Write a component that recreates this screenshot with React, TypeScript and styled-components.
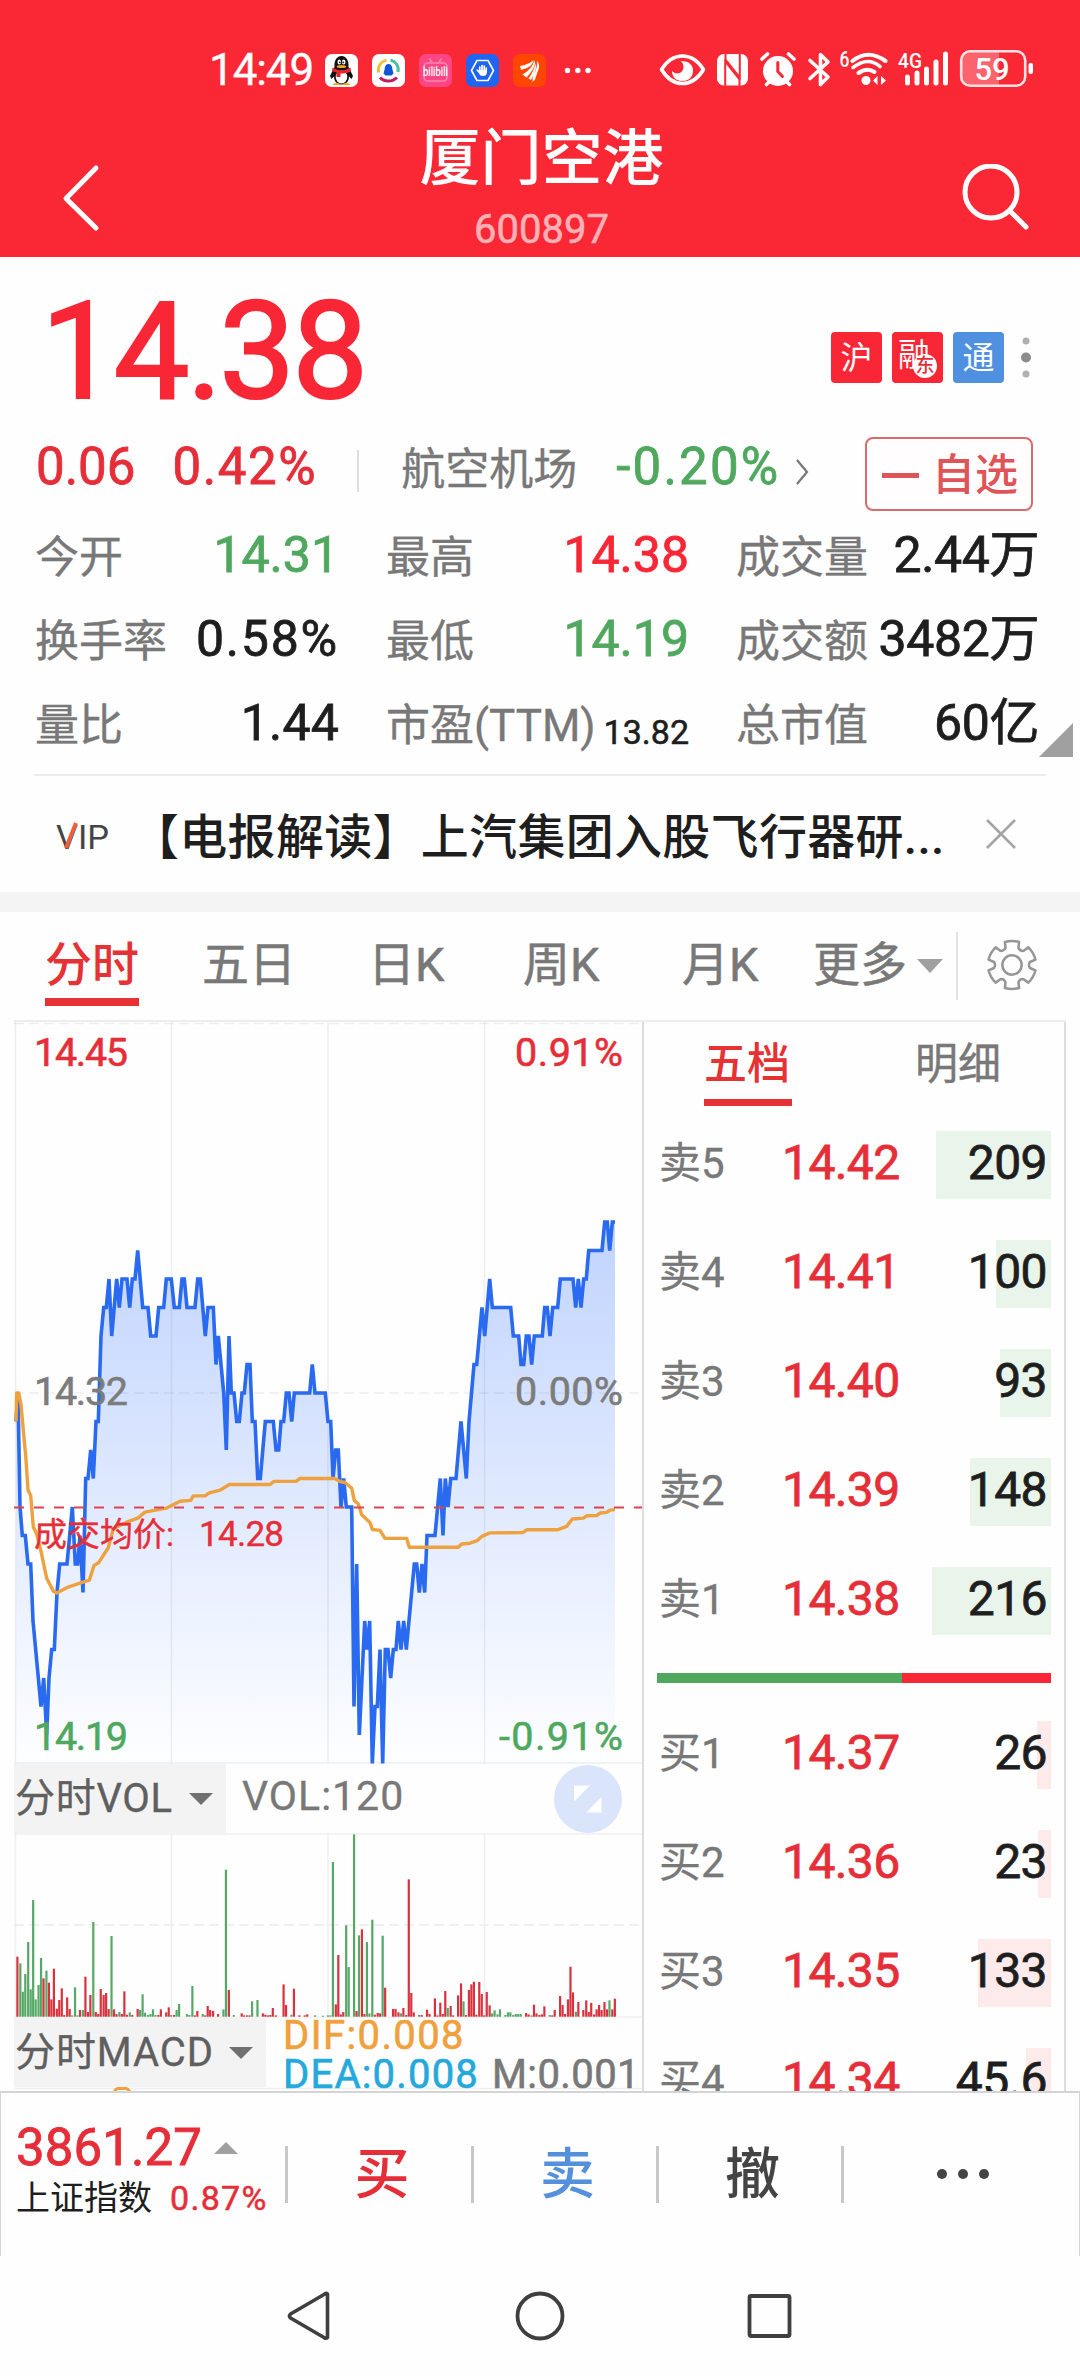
import React from 'react';
import styled, { createGlobalStyle } from 'styled-components';

const C = {
  header: '#fa2735',
  red: '#e62e39',
  tabRed: '#e63234',
  brightRed: '#f92736',
  green: '#4fa85e',
  gray: '#787878',
  dark: '#1e1e1e',
  line: '#ececec',
};

const Global = createGlobalStyle`
  html, body { margin: 0; padding: 0; background: #fefefe; }
  * { box-sizing: border-box; }
  body { font-family: Roboto, "Noto Sans CJK SC", sans-serif; }
`;

const Screen = styled.div`
  width: 1080px;
  height: 2376px;
  display: flex;
  flex-direction: column;
  background: #fefefe;
  overflow: hidden;
`;

interface TextProps {
  $size: number;
  $color?: string;
  $weight?: number;
  $track?: number;
}
const Text = styled.span<TextProps>`
  font-size: ${(p) => p.$size}px;
  line-height: ${(p) => Math.round(p.$size * 1.1)}px;
  color: ${(p) => p.$color ?? C.dark};
  font-weight: ${(p) => p.$weight ?? 500};
  letter-spacing: ${(p) => p.$track ?? 0}px;
  white-space: nowrap;
`;
// Figures are set a little heavier than regular and lighter than medium.
const Num = styled(Text)`
  font-weight: 400;
  -webkit-text-stroke: 0.016em;
`;
// Captions get a hairline of extra weight.
const Caption = styled(Text)`
  font-weight: 400;
  -webkit-text-stroke: 0.008em;
`;

/* ---------- header ---------- */
const Header = styled.header`
  height: 257px;
  background: ${C.header};
  flex: none;
`;
const StatusBar = styled.div`
  height: 92px;
  padding: 48px 46px 0 209px;
  display: flex;
  align-items: center;
`;
const AppIcons = styled.div`
  display: flex;
  gap: 14px;
  margin-left: 12px;
  svg { display: block; }
`;
const SystemIcons = styled.svg`
  margin-left: auto;
  display: block;
`;
const TitleBar = styled.div`
  height: 165px;
  padding: 0 50px 0 62px;
  display: grid;
  grid-template-columns: 80px 1fr 70px;
`;
const IconButton = styled.div`
  padding-top: 72px;
  svg { display: block; }
`;
const TitleBlock = styled.div`
  display: flex;
  flex-direction: column;
  align-items: center;
  padding-top: 31px;
  padding-right: 19px;
`;
const Title = styled.h1`
  margin: 0;
  font-size: 61px;
  line-height: 72px;
  font-weight: 500;
  color: #fff;
`;
const Code = styled.div`
  margin-top: 13px;
  font-size: 40px;
  line-height: 44px;
  color: #ffb1b6;
  -webkit-text-stroke: 0.6px;
`;

/* ---------- quote ---------- */
const PriceRow = styled.div`
  height: 180px;
  padding: 11px 34px 0 41px;
  display: flex;
  align-items: center;
  flex: none;
`;
const Tags = styled.div`
  margin-left: auto;
  margin-top: 10px;
  display: flex;
  align-items: center;
  gap: 10px;
`;
const Tag = styled.div<{ $bg: string }>`
  position: relative;
  width: 51px;
  height: 51px;
  border-radius: 4px;
  background: ${(p) => p.$bg};
  color: #fff;
  font-size: 32px;
  line-height: 52px;
  text-align: center;
`;
const TagShift = styled.span`
  display: block;
  width: 39px;
  line-height: 47px;
  padding-left: 5px;
`;
const TagBadge = styled.span`
  position: absolute;
  left: 21px;
  top: 22px;
  width: 24px;
  height: 24px;
  border-radius: 50%;
  background: #fff;
  color: ${C.red};
  font-size: 19px;
  font-weight: 500;
  line-height: 24px;
`;
const MoreDots = styled.svg`
  display: block;
  margin-left: 6px;
`;
const ChangeRow = styled.div`
  height: 74px;
  padding: 0 47px 0 36px;
  display: flex;
  align-items: flex-start;
  flex: none;
`;
const ChangeInfo = styled.div`
  height: 60px;
  display: flex;
  align-items: center;
`;
const ChangeNum = styled(Num)<{ $left?: number }>`
  margin-left: ${(p) => p.$left ?? 0}px;
`;
const Sector = styled(Caption)`
  margin-top: 5px;
`;
const Chevron = styled.svg`
  margin: 10px 0 0 15px;
`;
const ThinDivider = styled.i`
  width: 2px;
  height: 42px;
  margin: 8px 42px 0 40px;
  background: #dedede;
`;
const WatchButton = styled.button`
  margin: 0 0 0 auto;
  width: 168px;
  height: 74px;
  padding: 2px 0 0 2px;
  border: 2px solid #dd6a6c;
  border-radius: 8px;
  background: #fffdfd;
  display: flex;
  align-items: center;
  justify-content: center;
  gap: 13px;
  font-family: inherit;
`;
const Minus = styled.i`
  width: 37px;
  height: 5px;
  background: #df5557;
`;
const Stats = styled.div`
  height: 263px;
  padding-top: 2px;
  display: grid;
  grid-template-columns: 304px 303px 303px;
  column-gap: 47px;
  grid-auto-rows: 84px;
  padding-left: 35px;
  position: relative;
  flex: none;
`;
const Stat = styled.div`
  display: flex;
  justify-content: space-between;
  align-items: center;
`;
const StatLabel = styled(Caption)`
  margin-top: 6px;
`;
const StatValue = styled(Num)<{ $drop?: number }>`
  margin-top: ${(p) => p.$drop ?? 0}px;
`;
const Corner = styled.i`
  position: absolute;
  right: 7px;
  bottom: 17px;
  border-left: 34px solid transparent;
  border-bottom: 34px solid #a0a0a0;
`;
const News = styled.div`
  height: 118px;
  margin: 0 34px;
  border-top: 2px solid ${C.line};
  display: flex;
  align-items: center;
  flex: none;
`;
const Vip = styled.svg`
  margin: 6px 0 0 22px;
  flex: none;
  overflow: visible;
`;
const NewsTitle = styled(Text)`
  margin: 6px 0 0 19px;
  width: 820px;
`;
const CloseIcon = styled.svg`
  margin-left: 34px;
`;
const Band = styled.div`
  height: 20px;
  background: #f4f4f4;
  flex: none;
`;

/* ---------- period tabs ---------- */
const Tabs = styled.nav`
  height: 108px;
  display: flex;
  align-items: flex-start;
  padding-left: 45px;
  flex: none;
`;
const Tab = styled.div<{ $w: number; $active?: boolean }>`
  width: ${(p) => p.$w}px;
  height: 94px;
  padding-top: 26px;
  font-size: 47px;
  line-height: 54px;
  font-weight: ${(p) => (p.$active ? 500 : 400)};
  color: ${(p) => (p.$active ? C.tabRed : C.gray)};
  -webkit-text-stroke: ${(p) => (p.$active ? 0 : 0.5)}px;
  white-space: nowrap;
`;
const TabInner = styled.span<{ $active?: boolean }>`
  display: inline-block;
  height: 68px;
  border-bottom: 8px solid ${(p) => (p.$active ? C.tabRed : 'transparent')};
`;
const Caret = styled.i<{ $w: number; $h: number; $color: string; $up?: boolean }>`
  display: inline-block;
  border-left: ${(p) => p.$w / 2}px solid transparent;
  border-right: ${(p) => p.$w / 2}px solid transparent;
  ${(p) => (p.$up ? 'border-bottom' : 'border-top')}: ${(p) => p.$h}px solid ${(p) => p.$color};
`;
const MoreCaret = styled(Caret)`
  margin: 47px 0 0 8px;
`;
const TabsDivider = styled.i`
  width: 2px;
  height: 68px;
  margin: 20px 0 0 13px;
  background: #e3e3e3;
`;
const Gear = styled.svg`
  margin: 27px 0 0 28px;
`;

/* ---------- main area ---------- */
const Main = styled.main`
  height: 1071px;
  margin: 0 14px;
  border-top: 2px solid #ededed;
  display: grid;
  grid-template-columns: 628px 424px;
  overflow: hidden;
  flex: none;
`;
const ChartColumn = styled.section`
  display: flex;
  flex-direction: column;
  svg { display: block; flex: none; }
`;
const IndicatorRow = styled.div`
  height: 69px;
  display: flex;
  flex: none;
  position: relative;
`;
const IndicatorPicker = styled.div<{ $w: number }>`
  width: ${(p) => p.$w}px;
  padding: 0 13px 0 1px;
  background: #f3f3f3;
  display: flex;
  align-items: center;
  justify-content: space-between;
  flex: none;
`;
const IndicatorValue = styled(Caption)`
  margin: 10px 0 0 16px;
`;
const ExpandButton = styled.svg`
  margin: 1px 20px 0 auto;
`;
const MacdValues = styled.div`
  padding: 0 0 0 17px;
  display: grid;
  grid-template-columns: auto auto;
  grid-template-rows: 39px 39px;
  column-gap: 13px;
  align-content: start;
  height: 72px;
`;
const MacdText = styled(Num)`
  line-height: 39px;
  margin-top: -2px;
`;
const BookColumn = styled.section`
  border-left: 2px solid #dddddd;
  border-right: 2px solid #dddddd;
  padding: 0 13px 0 13px;
`;
const BookTabs = styled.div`
  height: 84px;
  padding-left: 47px;
  display: flex;
  gap: 123px;
`;
const BookTab = styled.div<{ $active?: boolean }>`
  width: 88px;
  height: 84px;
  padding-top: 17px;
  font-size: 43px;
  line-height: 50px;
  font-weight: ${(p) => (p.$active ? 500 : 400)};
  -webkit-text-stroke: ${(p) => (p.$active ? 0 : 0.4)}px;
  color: ${(p) => (p.$active ? C.tabRed : C.gray)};
  border-bottom: 7px solid ${(p) => (p.$active ? C.tabRed : 'transparent')};
`;
const BookRows = styled.div<{ $top: number }>`
  padding-top: ${(p) => p.$top}px;
  display: flex;
  flex-direction: column;
  gap: 41px;
`;
const BookRow = styled.div<{ $bar: number; $tint: string }>`
  height: 68px;
  padding: 0 4px 6px 2px;
  display: grid;
  grid-template-columns: 123px 1fr auto;
  align-items: center;
  background: linear-gradient(${(p) => p.$tint}, ${(p) => p.$tint}) right center / ${(p) => p.$bar}px 100% no-repeat;
`;
const Ratio = styled.div`
  height: 10px;
  margin-top: 38px;
  display: grid;
  grid-template-columns: 245px 149px;
`;
const RatioPart = styled.i<{ $bg: string }>`
  background: ${(p) => p.$bg};
`;
const BookLabel = styled(Caption)`
  margin-top: 4px;
`;

/* ---------- bottom ---------- */
const TradeBar = styled.footer`
  height: 165px;
  border: 2px solid #d4d4d4;
  border-width: 2px 1px 0 1px;
  display: flex;
  padding: 0 0 27px 0;
  align-items: center;
  flex: none;
`;
const IndexBlock = styled.div`
  width: 284px;
  padding: 14px 0 0 15px;
`;
const IndexLine = styled.div<{ $gap: number }>`
  display: flex;
  align-items: center;
  gap: ${(p) => p.$gap}px;
  & + & { margin-top: 4px; }
`;
const TradeItem = styled.div<{ $w: number; $color: string }>`
  width: ${(p) => p.$w}px;
  height: 57px;
  margin-top: 26px;
  border-left: 3px solid #c8c8c8;
  display: flex;
  align-items: center;
  justify-content: center;
  font-size: 55px;
  line-height: 57px;
  font-weight: 500;
  color: ${(p) => p.$color};
  padding-left: 5px;
`;
const NavBar = styled.div`
  height: 120px;
  display: flex;
  padding: 34px 0 0 286px;
  flex: none;
`;
const NavIcon = styled.svg<{ $gap: number }>`
  margin-right: ${(p) => p.$gap}px;
`;

/* ---------- data ---------- */
// Horizontal positions are stored in thirds of a pixel, vertical ones in ticks of 0.01 around 14.32.
const MORNING: number[][] = [
  [48, -1], [54, 0], [60, -4], [67, -5], [76, -5], [84, -6], [92, -6], [99, -8], [123, -11], [131, -10], [140, -12],
  [147, -10], [155, -9], [163, -9], [171, -7], [179, -6], [201, -6], [209, -5], [217, -4], [226, -6], [233, -6],
  [240, -5], [249, -7], [257, -3], [264, -3], [272, -2], [280, -3], [288, -1], [295, -1], [303, 2], [311, 3], [319, 3],
  [327, 4], [335, 2], [350, 4], [358, 3], [366, 4], [381, 4], [389, 3], [397, 4], [405, 4], [413, 5], [428, 3],
  [444, 3], [452, 2], [468, 2], [476, 3], [491, 3], [499, 4], [514, 4], [523, 3], [538, 3], [546, 4], [553, 4],
  [561, 3], [585, 3], [593, 4], [601, 4], [616, 2], [624, 3], [640, 3], [648, 1], [655, 2], [671, 0], [679, -2],
  [687, 2], [694, 0], [702, 0], [710, -1], [718, -1], [726, 0], [733, 0], [741, 1], [750, 1], [757, -1], [765, -1],
  [773, -3], [781, -3], [796, -1], [820, -1], [828, -2], [836, -2], [843, -1], [851, -1], [859, 0], [867, 0],
  [875, -1], [883, 0], [929, 0], [937, 1], [945, 0], [976, 0],
];
const AFTERNOON: number[][] = [
  [984, -1], [992, -1], [999, -3], [1007, -2], [1015, -2], [1023, -4], [1031, -3], [1039, -4], [1055, -4],
  [1062, -11], [1070, -6], [1078, -12], [1086, -10], [1094, -8], [1101, -9], [1109, -8], [1117, -13], [1125, -11],
  [1132, -11], [1140, -9], [1148, -13], [1156, -9], [1164, -9], [1172, -10], [1180, -9], [1188, -9], [1195, -8],
  [1203, -9], [1211, -8], [1219, -9], [1243, -6], [1250, -6], [1258, -7], [1266, -6], [1274, -7], [1281, -5],
  [1305, -5], [1321, -3], [1329, -5], [1336, -3], [1344, -4], [1352, -3], [1368, -3], [1383, -1], [1399, -3],
  [1407, -1], [1422, 1], [1430, 1], [1446, 3], [1454, 2], [1469, 4], [1477, 3], [1532, 3], [1540, 2], [1556, 2],
  [1563, 1], [1571, 1], [1579, 2], [1587, 2], [1595, 1], [1603, 2], [1627, 2], [1634, 3], [1642, 3], [1650, 2],
  [1658, 3], [1673, 3], [1681, 4], [1719, 4], [1727, 3], [1735, 4], [1743, 3], [1751, 4], [1759, 4], [1766, 5],
  [1806, 5], [1814, 6], [1822, 6], [1829, 5], [1837, 6], [1845, 6],
];
const PRICE = [...MORNING, ...AFTERNOON].map(([x, t]) => [x / 3 - 14, 371 - t * 28.5]);

const AVERAGE = [
  [48, -1], [50, 0], [56, 0], [63, -0.4], [70, -1.3], [77, -2.2], [84, -3.4], [92, -3.6], [100, -4.7], [110, -4.95],
  [122, -5.5], [140, -6.5], [160, -6.95], [170, -7.02], [200, -6.83], [240, -6.67], [268, -6.57], [282, -6.05],
  [295, -5.97], [325, -5.43], [340, -4.76], [378, -4.54], [415, -4.38], [435, -4.18], [500, -4.04], [540, -3.8],
  [572, -3.77], [580, -3.61], [615, -3.61], [628, -3.5], [660, -3.41], [688, -3.21], [810, -3.21], [822, -3.1],
  [888, -3.1], [900, -3], [1005, -3], [1020, -3.11], [1035, -3.14], [1055, -3.34], [1063, -3.77], [1075, -3.9],
  [1085, -4.27], [1110, -4.54], [1117, -4.79], [1140, -4.82], [1155, -5.1], [1220, -5.1], [1228, -5.41],
  [1375, -5.41], [1385, -5.3], [1410, -5.27], [1432, -5.18], [1447, -5.02], [1470, -4.91], [1568, -4.9],
  [1580, -4.8], [1672, -4.8], [1700, -4.68], [1717, -4.42], [1750, -4.39], [1760, -4.31], [1790, -4.3],
  [1800, -4.21], [1820, -4.19], [1830, -4.11], [1845, -4.09],
].map(([x, t]) => [x / 3 - 14, 371 - t * 28.5]);

const VOLUME =
  'r42:180 g49:160 g55:75 g61:128 g68:224 g74:82 g80:350 g86:52 g93:95 g99:176 r105:115 g112:138 r118:102 r124:52 r130:144 r137:24 r143:50 r149:85 r155:5 r162:58 r168:23 g174:4 g181:88 g187:4 r193:20 g200:20 r206:120 r212:14 r218:65 g225:284 r231:14 r237:8 r243:83 r250:65 r256:71 r262:23 g269:242 r275:22 r281:8 g288:14 r294:8 r300:76 r306:6 g313:13 r319:5 r332:23 g338:20 g344:67 g350:12 g357:5 g363:8 g369:22 g375:5 r382:5 r388:22 r401:13 r407:28 g413:5 r420:5 g426:20 g432:38 g451:8 g457:5 g464:92 r470:4 r476:17 g489:8 r495:4 r501:32 r507:20 r514:17 r526:8 g539:22 g545:441 r552:80 g564:5 r583:10 r589:4 r596:4 r602:4 g608:46 g621:50 r634:10 r640:6 r646:4 r652:5 r658:26 r665:4 r684:97 r690:35 g703:6 r709:84 r722:4 r735:4 r741:7 g760:4 g779:3 g791:4 g797:4 g803:464 r810:37 r816:185 r822:7 r828:14 g835:274 g841:149 g854:547 r860:17 g866:244 r873:262 r879:8 g885:224 g891:10 g898:291 r904:6 r911:11 r917:10 g923:243 r929:87 r948:23 r954:23 r961:13 g967:10 r973:26 r980:5 r986:412 r992:71 r998:13 g1011:5 r1017:5 r1030:21 r1036:8 r1049:55 r1055:4 r1062:42 r1068:8 r1074:77 g1080:26 r1087:32 r1093:4 r1105:64 r1112:100 g1118:46 r1124:5 r1131:80 r1137:97 r1143:105 r1149:6 r1156:104 r1162:68 r1168:4 r1174:74 r1181:34 g1187:10 g1193:19 g1200:7 g1206:22 g1219:5 g1225:13 g1231:13 g1238:5 g1244:8 g1250:8 g1256:8 r1269:11 r1275:7 g1282:4 r1288:36 r1294:10 r1301:5 r1307:7 r1313:31 g1326:5 r1332:4 r1338:20 r1351:62 r1357:35 r1363:8 r1370:52 r1376:150 r1382:73 g1389:15 r1395:44 r1407:20 r1414:49 r1420:14 r1426:41 r1433:7 r1439:22 r1445:35 r1451:20 r1458:44 r1464:22 g1470:49 r1477:22 r1483:54'
    .split(' ')
    .map((s) => {
      const [x, h] = s.slice(1).split(':').map(Number);
      return { up: s[0] === 'r', x: x / 2.412 - 14, h: h / 3 };
    });

const toPath = (pts: number[][]) => pts.map(([x, y], i) => `${i ? 'L' : 'M'}${x.toFixed(1)} ${y.toFixed(1)}`).join('');

const STATS: { label: string; value: string; color?: string; track?: number; small?: boolean }[] = [
  { label: '今开', value: '14.31', color: C.green, track: 0 },
  { label: '最高', value: '14.38', color: C.brightRed, track: 0 },
  { label: '成交量', value: '2.44万', track: -0.4 },
  { label: '换手率', value: '0.58%', track: 1.8 },
  { label: '最低', value: '14.19', color: C.green, track: 0 },
  { label: '成交额', value: '3482万', track: -0.4 },
  { label: '量比', value: '1.44', track: 0.2 },
  { label: '市盈(TTM)', value: '13.82', track: 0, small: true },
  { label: '总市值', value: '60亿', track: -0.4 },
];

const SELLS = [
  ['卖5', '14.42', '209', 115],
  ['卖4', '14.41', '100', 55],
  ['卖3', '14.40', '93', 51],
  ['卖2', '14.39', '148', 81],
  ['卖1', '14.38', '216', 119],
] as const;
const BUYS = [
  ['买1', '14.37', '26', 14],
  ['买2', '14.36', '23', 13],
  ['买3', '14.35', '133', 73],
  ['买4', '14.34', '45.6', 25],
] as const;

/* ---------- pieces ---------- */
const AppIconRow = () => (
  <AppIcons>
    <svg width="33" height="33" viewBox="0 0 33 33">
      <rect width="33" height="33" rx="7" fill="#fff" />
      <path d="M9.500 13C9 6 12 2 16.500 2S24 6 23.500 13L28 22L26.500 25L24 22.500C24 28 20.500 30.500 16.500 30.500S9 28 9 22.500L6.500 25L5 22Z" fill="#111" />
      <ellipse cx="16.500" cy="23" rx="5.800" ry="6.500" fill="#fff" />
      <path d="M7.500 13.500Q16.500 19 25.500 13.500L26 17.500Q21 20 15.500 19.500V23H11.500V18.500L7 17Z" fill="#e3262e" />
      <ellipse cx="14.300" cy="8" rx="1.800" ry="2.500" fill="#fff" />
      <ellipse cx="18.700" cy="8" rx="1.800" ry="2.500" fill="#fff" />
      <circle cx="14.700" cy="8.300" r=".9" fill="#111" />
      <circle cx="18.300" cy="8.300" r=".9" fill="#111" />
      <ellipse cx="16.500" cy="12.500" rx="4.800" ry="1.600" fill="#f7a21b" />
      <path d="M8 30.500Q12 28 15.500 30.500ZM17.500 30.500Q21 28 25 30.500Z" fill="#f7a21b" stroke="#f7a21b" />
    </svg>
    <svg width="33" height="33" viewBox="0 0 33 33">
      <rect width="33" height="33" rx="7" fill="#fff" />
      <g fill="none" strokeWidth="3">
        <path d="M6.500 18.500C5.500 12 9 7.500 14.500 6" stroke="#e9c53a" />
        <path d="M18.500 6C24 7.500 27 12 26 18" stroke="#4ac0a0" />
        <path d="M8 23.500C12 28 20 28.500 25 23.500" stroke="#c51a64" />
      </g>
      <path d="M16.500 10C19 10 20.300 12 20.300 15L21.500 19.500L19.500 21.500H13.500L11.500 19.500L12.700 15C12.700 12 14 10 16.500 10Z" fill="#0e56d8" />
    </svg>
    <svg width="33" height="33" viewBox="0 0 33 33">
      <rect width="33" height="33" rx="7" fill="#ff4583" />
      <g fill="none" stroke="#ff86ad" strokeWidth="1.600">
        <rect x="5" y="9" width="23" height="18" rx="4" />
        <path d="M10.500 4.500L13 8.500M22.500 4.500L20 8.500" />
      </g>
      <text x="16.500" y="22" textAnchor="middle" fontSize="13" fontWeight="500" fill="#fff" textLength="25" lengthAdjust="spacingAndGlyphs">bilibili</text>
    </svg>
    <svg width="33" height="33" viewBox="0 0 33 33">
      <rect width="33" height="33" rx="7" fill="#2065f2" />
      <path d="M5.500 16.500L11 6.500H22L27.500 16.500L22 26.500H11Z" fill="none" stroke="#fff" strokeWidth="1.600" strokeLinejoin="round" />
      <path d="M13 18L11.300 16.200M13.800 17V13M16 16V11.500M18.200 16V12M20.200 17V14" stroke="#fff" strokeWidth="1.700" strokeLinecap="round" />
      <path d="M12.800 16H21V18.500Q20.500 22 17 22T12.800 18.500Z" fill="#fff" />
    </svg>
    <svg width="33" height="33" viewBox="0 0 33 33">
      <rect width="33" height="33" rx="7" fill="#ff4600" />
      <path d="M7 12Q17 10 20.500 6Q20.500 13 8 16ZM9.500 20.500Q19 15 21.500 6.500Q24 12 13.500 23.500ZM24 7Q28 11 24.500 18L22 25.500L19.500 28Q19 23 22.500 17Q24.500 12 24 7ZM15.500 24.500Q21 17 22.500 9.500Q24.500 15 18 26Z" fill="#fff" />
    </svg>
    <svg width="36" height="33" viewBox="0 0 36 33">
      <g fill="#fff">
        <circle cx="7.500" cy="16.500" r="2.700" />
        <circle cx="17.800" cy="16.500" r="2.700" />
        <circle cx="28" cy="16.500" r="2.700" />
      </g>
    </svg>
  </AppIcons>
);

const SystemIconRow = () => (
  <SystemIcons width="376" height="44" viewBox="658 48 376 44">
    <path d="M661.500 69.500Q670 56 682.500 56T703.500 69.500Q695 83.500 682.500 83.500T661.500 69.500Z" fill="none" stroke="#fff" strokeWidth="3.600" strokeLinejoin="round" />
    <path d="M680.500 61C690 61 693.500 66 693 71.500C692.500 78 688 81 682 81C676 81 672 77 672 71C675 74.500 680.500 74 682.500 70.500C684.500 67 683.500 63 680.500 61Z" fill="#fff" />
    <rect x="717" y="54" width="31" height="31.500" rx="7" fill="#fff" />
    <path d="M725.200 86V61.500L739.500 79.500V86M739.800 53V77.500L725.500 59.500V53" fill="none" stroke={C.header} strokeWidth="2" />
    <path d="M728 53L738.500 66V53ZM727 86V71L737.500 86Z" fill={C.header} fillOpacity="0" />
    <circle cx="778" cy="71" r="15" fill="#fff" />
    <path d="M762 59L767.500 54M794 59L788.500 54M766.500 84.500L770 81M789.500 84.500L786 81" stroke="#fff" strokeWidth="3.600" strokeLinecap="round" />
    <path d="M777.800 62.500V71.500L782.500 76.500" fill="none" stroke={C.header} strokeWidth="3" strokeLinecap="round" />
    <path d="M810 60.500L828 77L820.500 84.500V54.500L828 62L810 78.500" fill="none" stroke="#fff" strokeWidth="3.600" strokeLinejoin="round" strokeLinecap="round" />
    <text x="839.500" y="66.500" fontSize="22" fontWeight="500" fill="#fff" textLength="10" lengthAdjust="spacingAndGlyphs">6</text>
    <g fill="none" stroke="#fff" strokeWidth="4" strokeLinecap="round">
      <path d="M852.500 61Q868 48.500 885.500 61" />
      <path d="M853 67.500Q868 56 880 66.500" strokeWidth="3.600" />
      <path d="M858.500 73Q867 67 874.500 72" />
    </g>
    <circle cx="866" cy="80.500" r="4.500" fill="#fff" />
    <path d="M873 80.500L877.500 76V85ZM886 80.500L881 76V85Z" fill="#fff" />
    <text x="898" y="67.500" fontSize="21" fontWeight="500" fill="#fff" textLength="24" lengthAdjust="spacingAndGlyphs">4G</text>
    <path d="M907.500 83V77M917 83V73M926.500 83V69M936 83V62M945.500 83V54" stroke="#fff" strokeWidth="5" strokeLinecap="round" />
    <path d="M970 51H999V86H970Q961 86 961 77V60Q961 51 970 51Z" fill="#fff" fillOpacity=".28" />
    <rect x="961.200" y="51.200" width="64" height="34.600" rx="9" fill="none" stroke="#ffe3e4" strokeWidth="2.600" />
    <rect x="1028.500" y="63" width="4.500" height="11" rx="2" fill="#fff" />
    <text x="992" y="79.500" textAnchor="middle" fontSize="31" fontWeight="500" fill="#fff">59</text>
  </SystemIcons>
);

const GearIcon = () => {
  const c = 26;
  const pts: string[] = [];
  for (let k = 0; k < 6; k++) {
    const a = (k * Math.PI) / 3 - Math.PI / 2;
    const at = (r: number, d: number) => `${(c + r * Math.cos(a + d)).toFixed(1)} ${(c + r * Math.sin(a + d)).toFixed(1)}`;
    pts.push(`${k ? 'L' : 'M'}${at(19, -0.36)}L${at(25, -0.3)}Q${at(26, 0)} ${at(25, 0.3)}L${at(19, 0.36)}Q${at(16.5, Math.PI / 6)} ${at(19, Math.PI / 3 - 0.36)}`);
  }
  return (
    <Gear width="52" height="52" viewBox="-1 -1 54 54" fill="none" stroke="#969696" strokeWidth="2.600" strokeLinejoin="round">
      <path d={`${pts.join('')}Z`} />
      <circle cx={c} cy={c} r="10" />
    </Gear>
  );
};

const PriceChart = () => {
  const line = toPath(PRICE);
  const lastX = PRICE[PRICE.length - 1][0];
  return (
    <svg width="628" height="742" viewBox="0 0 628 742">
      <defs>
        <linearGradient id="area" gradientUnits="userSpaceOnUse" x1="0" y1="200" x2="0" y2="742">
          <stop offset="0" stopColor="#c1d4fe" />
          <stop offset="1" stopColor="#fdfeff" />
        </linearGradient>
      </defs>
      <path d={`${line}L${lastX} 742L2 742Z`} fill="url(#area)" />
      <g stroke="#5a6478" strokeOpacity=".1" strokeWidth="1.500">
        <path d="M1.500 0V742M157.500 0V742M314 0V742M470.500 0V742M0 741H628" />
        <path d="M0 1.500H628M0 371H628" strokeDasharray="10 5" />
      </g>
      <path d={line} fill="none" stroke="#2a6af0" strokeWidth="3.600" />
      <path d={toPath(AVERAGE)} fill="none" stroke="#efa140" strokeWidth="3.400" strokeLinejoin="round" />
      <path d="M0 485.500H628" stroke="#dc4450" strokeWidth="2" strokeDasharray="10 10" />
      <g fontSize="39.500" strokeWidth=".6">
        <g fill={C.red} stroke={C.red}>
          <text x="20" y="44" textLength="94">14.45</text>
          <text x="609" y="44" textAnchor="end" textLength="108">0.91%</text>
        </g>
        <g fill="#7c7c7c" stroke="#7c7c7c">
          <text x="20" y="383" textLength="94">14.32</text>
          <text x="609" y="383" textAnchor="end" textLength="108">0.00%</text>
        </g>
        <g fill={C.green} stroke={C.green}>
          <text x="20" y="728" textLength="94">14.19</text>
          <text x="609" y="728" textAnchor="end" textLength="124">-0.91%</text>
        </g>
      </g>
      <g fill={C.red} stroke={C.red} strokeWidth=".4">
        <text x="20" y="524" fontSize="33">成交均价:</text>
        <text x="185" y="524" fontSize="35" textLength="85">14.28</text>
      </g>
    </svg>
  );
};

const VolumeChart = () => (
  <svg width="628" height="185" viewBox="0 0 628 185">
    <path d="M1.500 0V185M157.500 0V185M314 0V185M470.500 0V185M0 1H628M0 184H628" stroke="#efefef" strokeWidth="1.500" />
    <path d="M0 92H628" stroke="#ececec" strokeWidth="1.500" strokeDasharray="10 5" />
    {VOLUME.map((b) => (
      <rect key={b.x} x={b.x - 1.1} y={183.7 - b.h} width="2.200" height={b.h} fill={b.up ? '#d8323e' : '#55a866'} />
    ))}
  </svg>
);

const Book = ({ rows, tint, top }: { rows: readonly (readonly [string, string, string, number])[]; tint: string; top: number }) => (
  <BookRows $top={top}>
    {rows.map(([label, price, vol, bar]) => (
      <BookRow key={label} $bar={bar} $tint={tint}>
        <BookLabel $size={42} $color={C.gray}>{label}</BookLabel>
        <Num $size={48} $color={C.red} $track={-0.6}>{price}</Num>
        <Num $size={48} $track={-0.6}>{vol}</Num>
      </BookRow>
    ))}
  </BookRows>
);

export default function App() {
  return (
    <Screen>
      <Global />
      <Header>
        <StatusBar>
          <Caption $size={44} $color="#fff" $track={-1.1}>14:49</Caption>
          <AppIconRow />
          <SystemIconRow />
        </StatusBar>
        <TitleBar>
          <IconButton>
            <svg width="40" height="68" viewBox="0 0 40 68" fill="none" stroke="#fff" strokeWidth="5" strokeLinecap="round" strokeLinejoin="round">
              <path d="M34 4L4 34.500L34 64" />
            </svg>
          </IconButton>
          <TitleBlock>
            <Title>厦门空港</Title>
            <Code>600897</Code>
          </TitleBlock>
          <IconButton>
            <svg width="70" height="70" viewBox="0 0 70 70" fill="none" stroke="#fff" strokeWidth="5" strokeLinecap="round">
              <circle cx="31" cy="28" r="26" />
              <path d="M50 47L66 63" />
            </svg>
          </IconButton>
        </TitleBar>
      </Header>

      <PriceRow>
        <Num $size={135} $color={C.brightRed} $track={-3}>14.38</Num>
        <Tags>
          <Tag $bg={C.brightRed}>沪</Tag>
          <Tag $bg={C.brightRed}>
            <TagShift>融</TagShift>
            <TagBadge>东</TagBadge>
          </Tag>
          <Tag $bg="#4f90e0">通</Tag>
          <MoreDots width="26" height="51" viewBox="0 0 26 51">
            <circle cx="6" cy="9" r="3.500" fill="#b0b0b0" />
            <circle cx="6" cy="25.500" r="5" fill="#8c8c8c" />
            <circle cx="6" cy="42" r="3.500" fill="#b0b0b0" />
          </MoreDots>
        </Tags>
      </PriceRow>
      <ChangeRow>
        <ChangeInfo>
          <ChangeNum $size={51} $color={C.red}>0.06</ChangeNum>
          <ChangeNum $size={51} $color={C.red} $left={37} $track={1.6}>0.42%</ChangeNum>
          <ThinDivider />
          <Sector $size={44} $color={C.gray}>航空机场</Sector>
          <ChangeNum $size={51} $color={C.green} $left={39} $track={2.2}>-0.20%</ChangeNum>
          <Chevron width="16" height="28" viewBox="0 0 16 28">
            <path d="M2 2L12 14L2 26" fill="none" stroke="#777" strokeWidth="2.200" />
          </Chevron>
        </ChangeInfo>
        <WatchButton>
          <Minus />
          <Text $size={43} $color="#df5557">自选</Text>
        </WatchButton>
      </ChangeRow>
      <Stats>
        {STATS.map((s) => (
          <Stat key={s.label}>
            <StatLabel $size={44} $color={C.gray}>{s.label}</StatLabel>
            <StatValue $size={s.small ? 34 : 50} $color={s.color} $track={s.track} $drop={s.small ? 19 : 0}>{s.value}</StatValue>
          </Stat>
        ))}
        <Corner />
      </Stats>
      <News>
        <Vip width="56" height="32" viewBox="0 0 56 32">
          <text x="0" y="27.500" fontSize="34" fill="#444" textLength="53" lengthAdjust="spacingAndGlyphs">VIP</text>
          <path d="M10 27L20 2" stroke="#ee6038" strokeWidth="4" />
        </Vip>
        <NewsTitle $size={48} $track={0.3}>【电报解读】上汽集团入股飞行器研...</NewsTitle>
        <CloseIcon width="32" height="32" viewBox="0 0 32 32" stroke="#a5a5a5" strokeWidth="2.600">
          <path d="M2 2L30 30M30 2L2 30" />
        </CloseIcon>
      </News>
      <Band />

      <Tabs>
        <Tab $w={157} $active><TabInner $active>分时</TabInner></Tab>
        <Tab $w={166}><TabInner>五日</TabInner></Tab>
        <Tab $w={155}><TabInner>日K</TabInner></Tab>
        <Tab $w={159}><TabInner>周K</TabInner></Tab>
        <Tab $w={131}><TabInner>月K</TabInner></Tab>
        <Tab $w={96}><TabInner>更多</TabInner></Tab>
        <MoreCaret $w={26} $h={14} $color="#a0a0a0" />
        <TabsDivider />
        <GearIcon />
      </Tabs>

      <Main>
        <ChartColumn>
          <PriceChart />
          <IndicatorRow>
            <IndicatorPicker $w={212}>
              <Caption $size={40} $color="#5f5f5f" $track={0.7}>分时VOL</Caption>
              <Caret $w={24} $h={12} $color="#707070" />
            </IndicatorPicker>
            <IndicatorValue $size={41} $color={C.gray} $track={1}>VOL:120</IndicatorValue>
            <ExpandButton width="68" height="68" viewBox="0 0 68 68">
              <circle cx="34" cy="34" r="34" fill="#dae5fc" />
              <path d="M20 20.500H36L20 36.500ZM47.500 32V47.500H32Z" fill="#fff" />
            </ExpandButton>
          </IndicatorRow>
          <VolumeChart />
          <IndicatorRow>
            <IndicatorPicker $w={252}>
              <Caption $size={40} $color="#5f5f5f" $track={0.9}>分时MACD</Caption>
              <Caret $w={24} $h={12} $color="#707070" />
            </IndicatorPicker>
            <MacdValues>
              <MacdText $size={40} $color="#f0a03c" $track={1.4}>DIF:0.008</MacdText>
              <i />
              <MacdText $size={40} $color="#25a9dc" $track={1.2}>DEA:0.008</MacdText>
              <MacdText $size={40} $color={C.gray} $track={0.4}>M:0.001</MacdText>
            </MacdValues>
          </IndicatorRow>
          <svg width="628" height="6" viewBox="0 0 628 6">
            <path d="M0 1.500H628" stroke="#efefef" strokeWidth="1.500" />
            <path d="M100 6Q101 2 104 1.500H112Q115 2 116 6" fill="none" stroke="#efa140" strokeWidth="3" />
          </svg>
        </ChartColumn>
        <BookColumn>
          <BookTabs>
            <BookTab $active>五档</BookTab>
            <BookTab>明细</BookTab>
          </BookTabs>
          <Book rows={SELLS} tint="#e9f4ea" top={25} />
          <Ratio>
            <RatioPart $bg={C.green} />
            <RatioPart $bg={C.brightRed} />
          </Ratio>
          <Book rows={BUYS} tint="#fdeaea" top={38} />
        </BookColumn>
      </Main>

      <TradeBar>
        <IndexBlock>
          <IndexLine $gap={12}>
            <Num $size={51} $color={C.red} $track={0.1}>3861.27</Num>
            <Caret $w={24} $h={12} $color="#a0a0a0" $up />
          </IndexLine>
          <IndexLine $gap={18}>
            <Text $size={34} $weight={400}>上证指数</Text>
            <Num $size={34} $color={C.red} $track={1.3}>0.87%</Num>
          </IndexLine>
        </IndexBlock>
        <TradeItem $w={186} $color={C.red}>买</TradeItem>
        <TradeItem $w={185} $color="#5490dc">卖</TradeItem>
        <TradeItem $w={185} $color="#444">撤</TradeItem>
        <TradeItem $w={235} $color="#444">
          <svg width="54" height="12" viewBox="0 0 54 12" fill="#444">
            <circle cx="6" cy="6" r="5" />
            <circle cx="27" cy="6" r="5" />
            <circle cx="48" cy="6" r="5" />
          </svg>
        </TradeItem>
      </TradeBar>
      <NavBar>
        <NavIcon $gap={182} width="46" height="52" viewBox="0 0 46 52" fill="none" stroke="#3f3f3f" strokeWidth="3.600" strokeLinejoin="round">
          <path d="M41.500 4V47.500Q40 49 38 47.500L4.500 28Q2.500 26 4.500 24L38 4.500Q40 2.500 41.500 4Z" />
        </NavIcon>
        <NavIcon $gap={181} width="52" height="52" viewBox="0 0 52 52" fill="none" stroke="#3f3f3f" strokeWidth="3.800">
          <circle cx="26" cy="26" r="22.500" />
        </NavIcon>
        <NavIcon $gap={0} width="46" height="52" viewBox="0 0 46 52" fill="none" stroke="#3f3f3f" strokeWidth="3.800">
          <rect x="2.500" y="6" width="40" height="40" rx="1.500" />
        </NavIcon>
      </NavBar>
    </Screen>
  );
}
